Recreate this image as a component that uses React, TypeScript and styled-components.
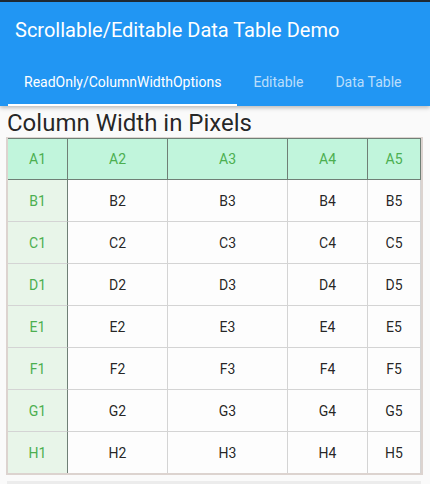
import React from "react";
import styled, { createGlobalStyle } from "styled-components";

const Global = createGlobalStyle`
  html, body { margin: 0; padding: 0; background: #fafafa; }
  body { font-family: Roboto, "Noto Sans", sans-serif; width: 430px; height: 484px; overflow: hidden; }
`;

const Page = styled.div`
  display: flex;
  flex-direction: column;
  width: 430px;
  height: 484px;
  background: #fafafa;
`;

const StatusBar = styled.div`
  height: 2px;
  background: #1f2a33;
`;

const AppBar = styled.header`
  background: #2196f3;
  box-shadow: 0 2px 4px rgba(0, 0, 0, 0.25);
  position: relative;
  z-index: 1;
`;

const Toolbar = styled.div`
  height: 56px;
  display: flex;
  align-items: center;
  padding-left: 15px;
  color: #fff;
  font-size: 20px;
  font-weight: 400;
`;

const Tabs = styled.div`
  height: 48px;
  display: flex;
  padding-left: 8px;
`;

const Tab = styled.div<{ $active?: boolean }>`
  padding: 0 16px;
  display: flex;
  align-items: center;
  font-size: 14px;
  font-weight: 400;
  color: ${(p) => (p.$active ? "#fff" : "rgba(255,255,255,0.7)")};
  box-shadow: ${(p) => (p.$active ? "inset 0 -2px 0 #fff" : "none")};
`;

const Heading = styled.div`
  font-size: 24px;
  color: rgba(0, 0, 0, 0.87);
  padding-left: 7px;
  margin-top: 3px;
  height: 28px;
  line-height: 28px;
`;

const Frame = styled.div`
  margin-left: 6px;
  width: 413px;
  border: 2px solid #dcd3cf;
  border-top-width: 1px;
  overflow: hidden;
  background: #fdfdfd;
`;

const Grid = styled.div`
  display: grid;
  grid-template-columns: 60px 100px 120px 80px 53px;
  grid-auto-rows: 42px;
`;

type Kind = "head" | "side" | "body";

const Cell = styled.div<{ $kind: Kind }>`
  display: flex;
  align-items: center;
  justify-content: center;
  font-size: 14px;
  box-sizing: border-box;
  color: ${(p) => (p.$kind === "body" ? "rgba(0,0,0,0.87)" : "#4caf50")};
  background: ${(p) =>
    p.$kind === "head" ? "#c1f5dc" : p.$kind === "side" ? "#e8f5e9" : "transparent"};
  border-bottom: 1px solid ${(p) => (p.$kind === "head" ? "#6f7f76" : "#d4d4d4")};
  border-top: ${(p) => (p.$kind === "head" ? "1px solid #6f7f76" : "none")};
  border-right: 1px solid
    ${(p) => (p.$kind === "head" || p.$kind === "side" ? "#6f7f76" : "#d4d4d4")};
`;

const Scrollbar = styled.div`
  margin: 6px 0 0 7px;
  width: 414px;
  height: 3px;
  background: #ececec;
`;

const rows = ["A", "B", "C", "D", "E", "F", "G", "H"];
const cols = [1, 2, 3, 4, 5];

export default function App() {
  return (
    <Page>
      <Global />
      <StatusBar />
      <AppBar>
        <Toolbar>Scrollable/Editable Data Table Demo</Toolbar>
        <Tabs>
          <Tab $active>ReadOnly/ColumnWidthOptions</Tab>
          <Tab>Editable</Tab>
          <Tab>Data Table</Tab>
        </Tabs>
      </AppBar>
      <Heading>Column Width in Pixels</Heading>
      <Frame>
        <Grid>
          {rows.map((r, ri) =>
            cols.map((c) => {
              const kind: Kind = ri === 0 ? "head" : c === 1 ? "side" : "body";
              return (
                <Cell key={r + c} $kind={kind}>
                  {r}
                  {c}
                </Cell>
              );
            })
          )}
        </Grid>
      </Frame>
      <Scrollbar />
    </Page>
  );
}
